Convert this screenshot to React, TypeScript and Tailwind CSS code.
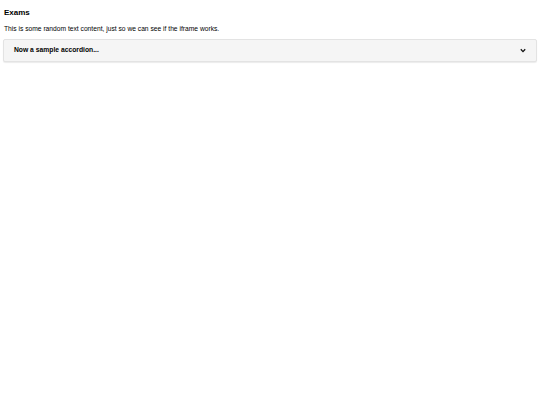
import { useState } from 'react';

export default function App() {
  const [open, setOpen] = useState(false);

  return (
    <div className="min-h-screen bg-white px-[3px] pt-[8px] text-black" style={{ fontFamily: '"Liberation Sans", Arial, sans-serif' }}>
      <h1 className="text-[8px] font-bold leading-[10px] px-px">Exams</h1>
      <p className="mt-[7px] text-[6.7px] leading-[8px] px-px">
        This is some random text content, just so we can see if the iframe works.
      </p>
      <div className="mt-[6px] rounded-[2px] border border-[#e3e3e3] bg-[#f5f5f5] shadow-[0_1px_1px_rgba(0,0,0,0.08)]">
        <button
          onClick={() => setOpen(!open)}
          className="flex h-[21px] w-full items-center justify-between pl-[10px] pr-[10px] text-left"
        >
          <span className="text-[6.75px] font-bold">Now a sample accordion...</span>
          <svg width="6" height="5" viewBox="0 0 6 5" className={open ? 'rotate-180' : ''}>
            <path d="M0.8 1.2 L3 3.6 L5.2 1.2" fill="none" stroke="#111" strokeWidth="1.3" />
          </svg>
        </button>
        {open && <div className="px-[10px] pb-[6px] text-[6.5px]">Accordion content</div>}
      </div>
    </div>
  );
}
